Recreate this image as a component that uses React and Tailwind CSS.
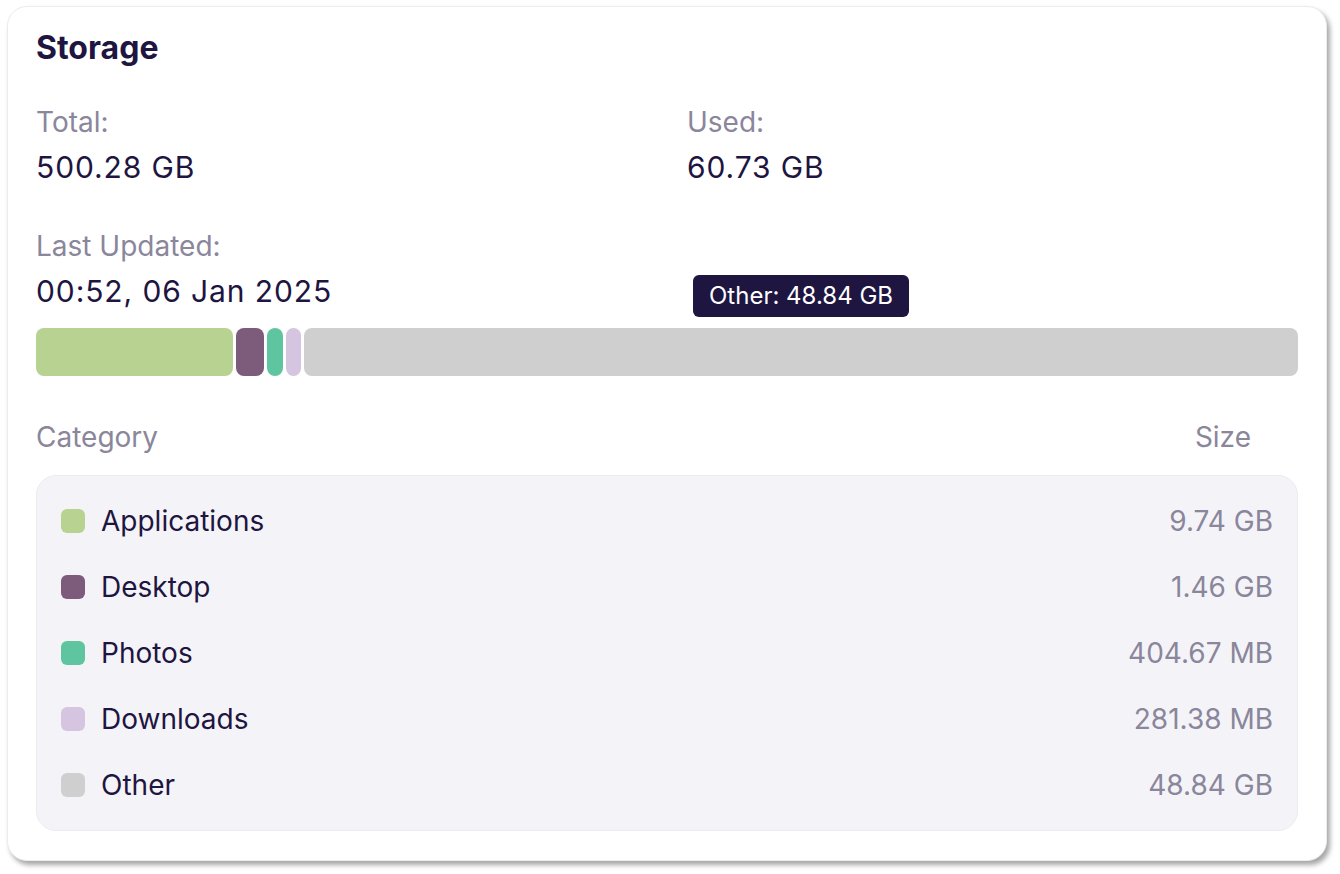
import React from "react";

const rows = [
  { name: "Applications", size: "9.74 GB", color: "bg-[#b8d292]" },
  { name: "Desktop", size: "1.46 GB", color: "bg-[#7d5b7a]" },
  { name: "Photos", size: "404.67 MB", color: "bg-[#5fc5a0]" },
  { name: "Downloads", size: "281.38 MB", color: "bg-[#d5c5e0]" },
  { name: "Other", size: "48.84 GB", color: "bg-[#cfcfcf]" },
];

export default function App() {
  return (
    <div className="min-h-[874px] w-[1340px] bg-white pl-[7px] pt-[6px]" style={{ fontFamily: "Inter, 'Noto Sans', sans-serif" }}>
      <div className="w-[1320px] rounded-[20px] border border-[#ececec] bg-white px-[28px] pt-[23px] pb-[29px] shadow-[3px_4px_5px_rgba(0,0,0,0.35)] text-[#1e1541]">
        <h1 className="text-[32px] font-bold leading-[36px]">Storage</h1>

        <div className="mt-[38px] grid grid-cols-2 gap-x-[40px]">
          <div>
            <div className="text-[28px] leading-[36px] text-[#8a869b]">Total:</div>
            <div className="mt-[9px] text-[30px] tracking-[0.9px] leading-[36px]">500.28 GB</div>
          </div>
          <div>
            <div className="text-[28px] leading-[36px] text-[#8a869b]">Used:</div>
            <div className="mt-[9px] text-[30px] tracking-[0.9px] leading-[36px]">60.73 GB</div>
          </div>
        </div>

        <div className="mt-[43px]">
          <div className="text-[28px] leading-[36px] text-[#8a869b]">Last Updated:</div>
          <div className="mt-[9px] text-[30px] tracking-[0.9px] leading-[36px]">00:52, 06 Jan 2025</div>
        </div>

        <div className="mt-[19px] flex h-[48px] gap-[3px]">
          <div className="w-[197px] rounded-[8px] bg-[#b8d292]" />
          <div className="w-[28px] rounded-[8px] bg-[#7d5b7a]" />
          <div className="w-[16px] rounded-[8px] bg-[#5fc5a0]" />
          <div className="w-[15px] rounded-[8px] bg-[#d5c5e0]" />
          <div className="relative flex-1 rounded-[8px] bg-[#cfcfcf]">
            <div className="absolute bottom-[59px] left-1/2 -translate-x-1/2 whitespace-nowrap rounded-[6px] bg-[#1e1541] px-[16px] py-[6px] text-[24px] leading-[30px] text-white">
              Other: 48.84 GB
            </div>
          </div>
        </div>

        <div className="mt-[43px] flex items-center justify-between pr-[47px] text-[28px] leading-[36px] text-[#8a869b]">
          <span>Category</span>
          <span>Size</span>
        </div>

        <div className="mt-[20px] rounded-[20px] border border-[#ebebf0] bg-[#f4f4f8] py-[12px] pl-[24px] pr-[24px]">
          {rows.map((r) => (
            <div key={r.name} className="flex h-[66px] items-center">
              <div className={`h-[24px] w-[24px] rounded-[6px] ${r.color}`} />
              <span className="ml-[16px] flex-1 text-[28px] leading-[36px]">{r.name}</span>
              <span className="text-[28px] leading-[36px] text-[#8a869b]">{r.size}</span>
            </div>
          ))}
        </div>
      </div>
    </div>
  );
}
